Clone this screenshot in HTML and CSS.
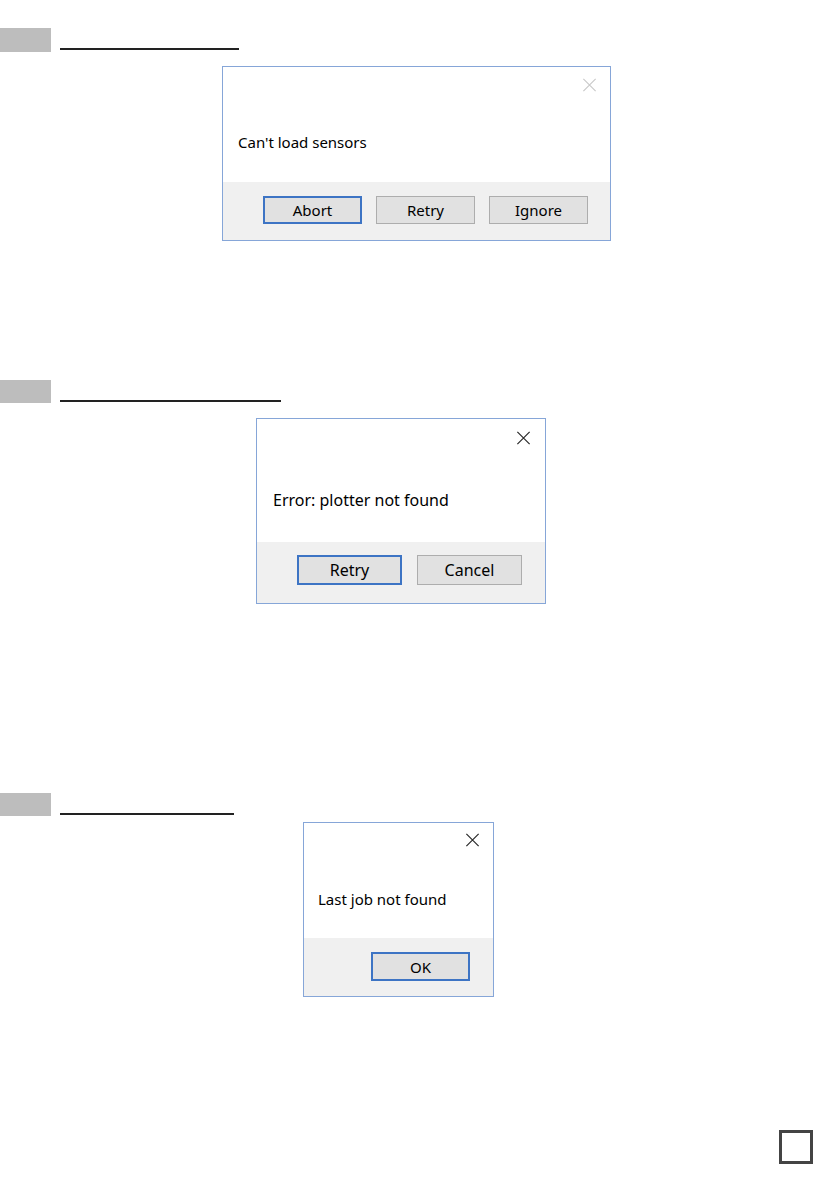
FILE: index.html
```html
<!DOCTYPE html>
<html lang="en">
<head>
<meta charset="utf-8">
<title>Dialogs</title>
<link rel="stylesheet" href="styles.css">
</head>
<body>
<div class="page">
  <section class="section s1">
    <div class="head"><span class="tab"></span><span class="rule r1"></span></div>
    <div class="dialog d1">
      <div class="body">
        <div class="closerow"><svg class="x x-dim" viewBox="0 0 16 16"><path d="M1 1L15 15M15 1L1 15"/></svg></div>
        <p class="msg">Can't load sensors</p>
      </div>
      <div class="foot">
        <button class="btn def">Abort</button>
        <button class="btn">Retry</button>
        <button class="btn">Ignore</button>
      </div>
    </div>
  </section>

  <section class="section s2">
    <div class="head"><span class="tab"></span><span class="rule r2"></span></div>
    <div class="dialog d2">
      <div class="body">
        <div class="closerow"><svg class="x" viewBox="0 0 16 16"><path d="M1 1L15 15M15 1L1 15"/></svg></div>
        <p class="msg">Error: plotter not found</p>
      </div>
      <div class="foot">
        <button class="btn def">Retry</button>
        <button class="btn">Cancel</button>
      </div>
    </div>
  </section>

  <section class="section s3">
    <div class="head"><span class="tab"></span><span class="rule r3"></span></div>
    <div class="dialog d3">
      <div class="body">
        <div class="closerow"><svg class="x" viewBox="0 0 16 16"><path d="M1 1L15 15M15 1L1 15"/></svg></div>
        <p class="msg">Last job not found</p>
      </div>
      <div class="foot">
        <button class="btn def">OK</button>
      </div>
    </div>
  </section>

  <div class="pagenum"></div>
</div>
</body>
</html>
```

FILE: styles.css
```css
* { box-sizing: border-box; }
html, body { margin: 0; padding: 0; background: #fff; }
body { font-family: "Noto Sans", "Open Sans", "DejaVu Sans", sans-serif; color: #000; }
.page { width: 839px; height: 1191px; padding-top: 28px; display: flex; flex-direction: column; }

.head { display: flex; align-items: flex-end; height: 24px; }
.tab { width: 51px; height: 24px; background: #bdbdbd; }
.rule { height: 2px; background: #222; margin-left: 9px; margin-bottom: 2px; }
.r1 { width: 179px; }
.r2 { width: 221px; }
.r3 { width: 174px; }
.s2 .head, .s3 .head { height: 23px; }
.s2 .tab, .s3 .tab { height: 23px; }
.s2 .rule { margin-bottom: 1px; }
.s3 .rule { margin-bottom: 1px; }

.s2 { margin-top: 139px; }
.s3 { margin-top: 189px; }

.dialog { border: 1px solid #86a6d8; background: #fff; display: flex; flex-direction: column; }
.body { display: flex; flex-direction: column; }
.closerow { display: flex; justify-content: flex-end; }
.x { width: 15px; height: 14px; }
.x path { stroke: #2b2b2b; stroke-width: 1.4; fill: none; }
.x-dim path { stroke: #c9c9c9; stroke-width: 1.3; }
.msg { margin: 0; font-size: 15px; line-height: 20px; color: #000; }
.foot { background: #f0f0f0; display: flex; justify-content: flex-end; }
.btn { font-family: inherit; font-size: 15px; color: #000; background: #e1e1e1; border: 1px solid #adadad; padding: 0; margin: 0; }
.btn.def { border: 2px solid #3d74c4; }

.d1 { margin: 14px 0 0 222px; width: 389px; height: 175px; }
.d1 .body { height: 115px; padding: 11px 13px 0 15px; }
.d1 .msg { margin-top: 40px; }
.d1 .foot { flex: 1; padding: 14px 22px 0 0; gap: 14px; }
.d1 .btn { width: 99px; height: 28px; }

.d2 { margin: 15px 0 0 256px; width: 290px; height: 186px; }
.d2 .body { height: 123px; padding: 12px 14px 0 16px; }
.d2 .x { width: 15px; height: 14px; }
.d2 .msg { font-size: 16px; line-height: 22px; margin-top: 44px; }
.d2 .foot { flex: 1; padding: 13px 23px 0 0; gap: 15px; }
.d2 .btn { width: 105px; height: 30px; font-size: 16px; }

.d3 { margin: 6px 0 0 303px; width: 191px; height: 175px; }
.d3 .body { height: 115px; padding: 10px 13px 0 14px; }
.d3 .msg { margin-top: 42px; }
.d3 .foot { flex: 1; padding: 14px 23px 0 0; }
.d3 .btn { width: 99px; height: 29px; }

.pagenum { width: 34px; height: 34px; border: 3px solid #444; margin: 133px 0 0 779px; }
```
